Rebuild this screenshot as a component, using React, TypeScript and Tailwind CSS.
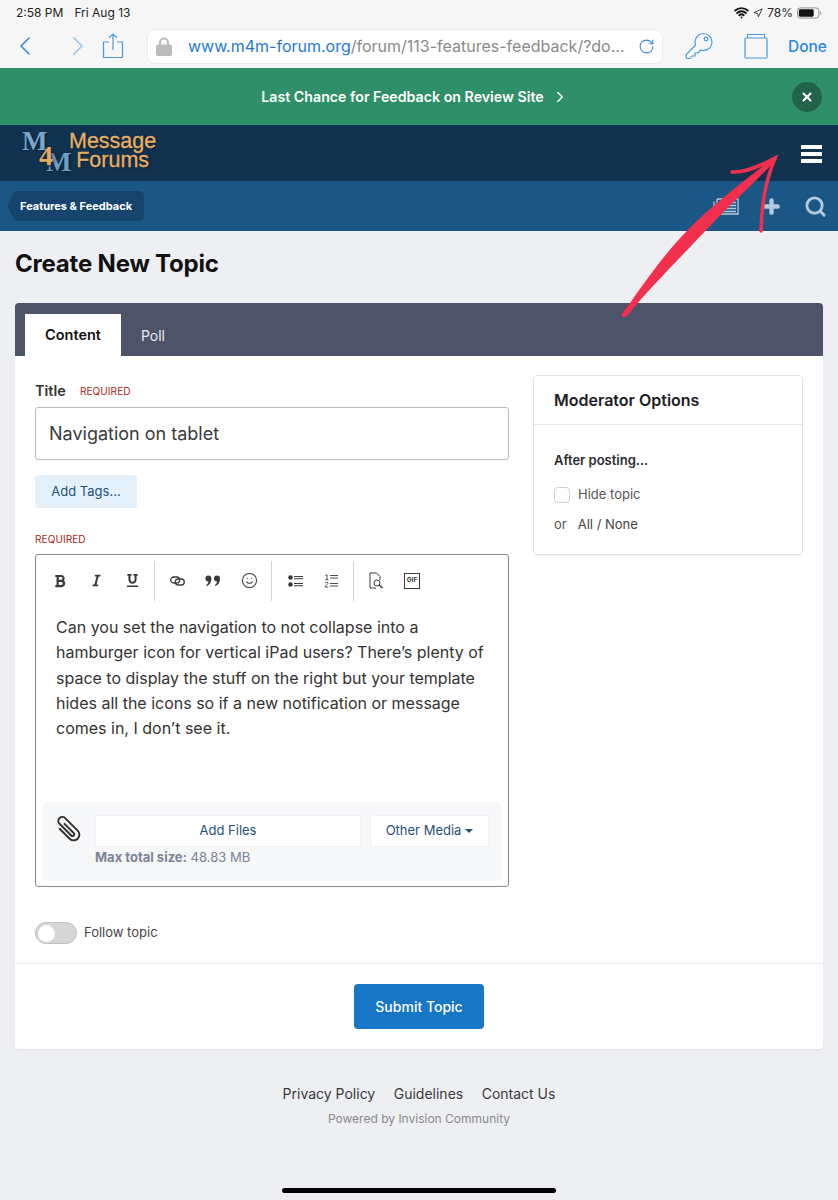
import React from 'react';
import { X, ChevronRight, ChevronLeft, Search, Plus, Smile, RotateCw, Navigation, Wifi } from 'lucide-react';
import { FaBold, FaItalic, FaUnderline } from 'react-icons/fa';

const ShareIcon = () => (
  <svg width="22" height="26" viewBox="0 0 22 26" fill="none" stroke="#4b9be0" strokeWidth="1.2">
    <path d="M7 9H1.500v15.500h19V9H15" />
    <path d="M11 17V1M7 4.800L11 1l4 3.800" />
  </svg>
);

const TabsIcon = () => (
  <svg width="24" height="26" viewBox="0 0 24 26" fill="none" stroke="#4b9be0" strokeWidth="1.2">
    <rect x="1" y="5" width="22" height="20" rx="1" />
    <path d="M3.500 5V1.500h17V5" />
  </svg>
);

const KeyIcon = () => (
  <svg width="28" height="28" viewBox="0 0 28 28" fill="none" stroke="#4b9be0" strokeWidth="1.2">
    <path d="M18.500 1.500a8.500 8.500 0 0 1 0 17c-1 0-2-.2-2.900-.5L13 21h-3v3H7l-2 2.500H2l-.8-.8v-3.200l9.400-9.500c-.4-1-.6-2-.6-3a8.500 8.500 0 0 1 8.500-8.500z" />
    <circle cx="21" cy="7" r="1.800" />
  </svg>
);

const LockIcon = () => (
  <svg className="shrink-0" width="16" height="19" viewBox="0 0 16 19" fill="#bcbcbc">
    <path d="M3 8V5.500a5 5 0 0 1 10 0V8h-2V5.500a3 3 0 0 0-6 0V8z" />
    <rect x="0" y="7.500" width="16" height="11.500" rx="2" />
  </svg>
);

const Battery = () => (
  <svg width="25" height="12" viewBox="0 0 27 12">
    <rect x="0.500" y="0.500" width="23" height="11" rx="3" fill="none" stroke="#888" />
    <rect x="2" y="2" width="16" height="8" rx="1.500" fill="#111" />
    <path d="M25 4.200c1 .3 1.400 1 1.400 1.800s-.4 1.500-1.400 1.800z" fill="#999" />
  </svg>
);

const NewsIcon = () => (
  <svg width="26" height="17" viewBox="0 0 26 17" fill="none" stroke="#b5c9dc" strokeWidth="1.300">
    <path d="M4 1h21v15H3a2 2 0 0 1-2-2V3.500" />
    <path d="M4 1v13" />
    <rect x="7" y="3.500" width="7" height="5" fill="#b5c9dc" stroke="none" />
    <path d="M16 4.500h7M16 7.500h7M7 10.500h16M7 13.500h16" />
  </svg>
);

const LinkIcon = () => (
  <svg width="15" height="10" viewBox="0 0 15 10" fill="none" stroke="#3a3a3a" strokeWidth="1.300">
    <rect x="0.700" y="1" width="9" height="6" rx="3" />
    <rect x="5.300" y="3" width="9" height="6" rx="3" />
  </svg>
);

const QuoteIcon = () => (
  <svg width="16" height="12" viewBox="0 0 16 12" fill="#3a3a3a">
    <circle cx="3.400" cy="3.500" r="3" />
    <path d="M6.400 3.500c0 4-2 6.500-4.600 7.500l-.6-1c1.600-1 2.300-2.500 2.300-4z" />
    <circle cx="12" cy="3.500" r="3" />
    <path d="M15 3.500c0 4-2 6.500-4.600 7.500l-.6-1c1.600-1 2.300-2.500 2.300-4z" />
  </svg>
);

const ListIcon = () => (
  <svg width="15" height="12" viewBox="0 0 15 12" fill="#3a3a3a">
    <circle cx="2.500" cy="2.500" r="2.300" />
    <circle cx="2.500" cy="9.500" r="2.300" />
    <rect x="6" y="1" width="9" height="1" />
    <rect x="6" y="3.200" width="9" height="1" />
    <rect x="6" y="8" width="9" height="1" />
    <rect x="6" y="10.200" width="9" height="1" />
  </svg>
);

const NumberedIcon = () => (
  <svg width="14" height="14" viewBox="0 0 14 14" fill="none" stroke="#3a3a3a" strokeWidth="0.9">
    <path d="M1.500 1.500L3 .8v5M1.500 5.800h3M1 9c.5-1 3-1 3 .4 0 1-3 2-3 3.600h3.300" />
    <path d="M6 1.500h8M6 4h8M6 9.500h8M6 12h8" />
  </svg>
);

const PreviewIcon = () => (
  <svg width="15" height="17" viewBox="0 0 15 17" fill="none" stroke="#3a3a3a" strokeWidth="1">
    <path d="M7 16H1V1h6.500L11 4.500V8" />
    <circle cx="8" cy="11" r="3" />
    <path d="M10.200 13.200L13.500 16" strokeWidth="1.500" />
  </svg>
);

const ClipIcon = () => (
  <svg className="shrink-0 -ml-[2px] -mt-[2px]" width="32" height="32" viewBox="0 0 28 28" fill="none" stroke="#333" strokeWidth="1.700">
    <g transform="rotate(-45 14 14)">
      <path d="M9 8v13a5 5 0 0 0 10 0V5.500a3.500 3.500 0 0 0-7 0V20a1.500 1.500 0 0 0 3 0V8" />
    </g>
  </svg>
);

const Arrow = () => (
  <svg className="absolute left-0 top-0 pointer-events-none" width="838" height="330" viewBox="0 0 838 330">
    <path
      d="M622 314C640 290 665 250 700 218C725 195 755 172 776 156L777 159C755 182 730 205 712 224C692 245 668 270 652 287C642 298 634 307 628 315C626 318 620 318 622 314Z"
      fill="#f2304e"
    />
    <path d="M732 172C745 173 760 166 775 158C768 175 762 195 761 231" fill="none" stroke="#f2304e" strokeWidth="3.500" strokeLinecap="round" />
  </svg>
);

const Divider = () => <div className="w-px h-10 bg-[#d4d4d4]" />;

const ToolBtn: React.FC<{ children: React.ReactNode }> = ({ children }) => (
  <div className="w-[36px] flex items-center justify-center">{children}</div>
);

export default function App() {
  return (
    <div className="relative w-[838px] h-[1200px] overflow-hidden bg-[#eeeff3] text-[#2d2d2d] font-['Inter','Liberation_Sans',sans-serif]">
      {/* Browser chrome */}
      <div className="h-[68px] bg-[#f6f6f6] flex flex-col">
        <div className="h-[25px] pl-4 pr-[16px] flex items-center justify-between text-[12px] text-[#222]">
          <div className="flex gap-[11px]">
            <span>2:58 PM</span>
            <span>Fri Aug 13</span>
          </div>
          <div className="flex items-center gap-[4px]">
            <Wifi size={15} strokeWidth={3} className="text-[#111]" />
            <Navigation size={10} className="text-[#222]" />
            <span className="text-[12px]">78%</span>
            <Battery />
          </div>
        </div>
        <div className="flex items-center h-[43px] pt-[1px] pb-[2px]">
          <div className="w-[147px] pl-[14px] flex items-center">
            <ChevronLeft size={32} strokeWidth={1.3} className="text-[#3b8fdc] -ml-[5px]" />
            <ChevronRight size={32} strokeWidth={1.3} className="text-[#9cc4ea] ml-[21px]" />
            <div className="ml-[8px]"><ShareIcon /></div>
          </div>
          <div className="w-[516px] h-[35px] bg-white rounded-[8px] border border-[#ececec] flex items-center pl-[8px] pr-[7px] text-[16px] whitespace-nowrap">
            <LockIcon />
            <span className="ml-[16px] text-[#1f7ad0]">www.m4m-forum.org</span>
            <span className="text-[#8a8a8a]">/forum/113-features-feedback/?do...</span>
            <RotateCw size={17} strokeWidth={1.5} className="ml-auto shrink-0 text-[#3b8fdc]" />
          </div>
          <div className="ml-[22px]"><KeyIcon /></div>
          <div className="ml-[31px]"><TabsIcon /></div>
          <span className="ml-[20px] pt-[1px] text-[15.5px] font-medium text-[#2b88dc]">Done</span>
        </div>
      </div>

      {/* Announcement */}
      <div className="relative h-[57px] bg-[#2f8f68] flex items-center justify-center text-white text-[14.2px] font-semibold pr-[8px] pt-[1px]">
        <span>Last Chance for Feedback on Review Site</span>
        <ChevronRight size={18} strokeWidth={2} className="ml-[7px]" />
        <div className="absolute left-[792px] top-[14px] w-[30px] h-[30px] rounded-full bg-[#23634c] flex items-center justify-center">
          <X size={14} strokeWidth={3.5} />
        </div>
      </div>

      {/* Site header */}
      <div className="h-[56px] bg-[#113350] flex justify-between pl-[21px] pr-[16px]">
        <div className="flex">
          <div className="relative w-[48px] h-[56px] font-['Liberation_Serif',serif] font-bold leading-none [text-shadow:1px_1px_3px_#0a1e30]">
            <span className="absolute left-[1px] top-[3px] text-[27px] text-[#7aa6c9]">M</span>
            <span className="absolute left-[25px] top-[24px] text-[27px] text-[#6f9fc4]">M</span>
            <span className="absolute left-[18px] top-[17px] text-[28px] text-[#e8a95c]">4</span>
          </div>
          <div className="pt-[6.5px] flex flex-col items-center text-[#e9ae62] text-[21.5px] leading-[19px] font-['Liberation_Sans',sans-serif] [-webkit-text-stroke:0.3px_#e9ae62] [text-shadow:1px_1px_3px_#0a1e30]">
            <span>Message</span>
            <span>Forums</span>
          </div>
        </div>
        <div className="flex flex-col gap-[3.5px] pt-[20px]">
          <div className="w-[21px] h-[3.5px] bg-white" />
          <div className="w-[21px] h-[3.5px] bg-white" />
          <div className="w-[21px] h-[3.5px] bg-white" />
        </div>
      </div>

      {/* Breadcrumb bar */}
      <div className="h-[50px] bg-[#1a5686] flex items-center justify-between pl-[15px] pr-[11px]">
        <div className="relative h-[30px] w-[129px] bg-[#16446d] rounded-r-[5px] flex items-center pl-[5px] text-white text-[11px] font-bold">
          <div className="absolute -left-[8px] top-0 w-0 h-0 border-y-[15px] border-y-transparent border-r-[8px] border-r-[#16446d]" />
          <span className="relative">Features &amp; Feedback</span>
        </div>
        <div className="flex items-center">
          <NewsIcon />
          <Plus size={21} strokeWidth={5} className="ml-[22px] text-[#b5c9dc]" />
          <Search size={23} strokeWidth={3} className="ml-[22px] text-[#b5c9dc]" />
        </div>
      </div>

      {/* Page */}
      <div className="px-[15px]">
        <h1 className="pt-[18px] h-[72px] text-[24px] leading-[30px] font-bold tracking-[-0.2px] text-[#111]">Create New Topic</h1>
        <div className="bg-white rounded-[4px] shadow-[0_1px_2px_rgba(0,0,0,0.06)] overflow-hidden h-[746px]">
          <div className="h-[53px] bg-[#4d5469] flex items-end pl-[10px]">
            <div className="h-[42px] w-[96px] bg-white flex items-center justify-center pb-[1px] text-[14.500px] font-semibold text-[#111]">Content</div>
            <div className="h-[42px] w-[64px] flex items-center justify-center text-[14px] text-[#e8e9ee]">Poll</div>
          </div>

          <div className="h-[607px] flex pl-[20px] pr-[20px] pt-[19px]">
            <div className="w-[474px] flex flex-col">
              <div className="flex items-center h-[32px]">
                <span className="text-[14.500px] font-semibold text-[#333] -mt-[1px]">Title</span>
                <span className="ml-[14px] text-[10px] text-[#a81c1c] tracking-[0.1px]">REQUIRED</span>
              </div>
              <div className="h-[53px] border border-[#bdbdbd] rounded-[3px] flex items-center pl-[13px] text-[18px] text-[#3a3a3a]">Navigation on tablet</div>
              <div className="mt-[15px] w-[102px] h-[33px] bg-[#e5f1fa] rounded-[4px] flex items-center justify-center text-[13px] text-[#1f5078]">Add Tags...</div>
              <div className="mt-[24px] h-[14px] flex items-center text-[10px] text-[#a81c1c] tracking-[0.1px]">REQUIRED</div>
              <div className="mt-[8px] h-[333px] border border-[#8a8a8a] rounded-[3px] flex flex-col">
                <div className="h-[50px] flex items-center pl-[6px] pt-[1px]">
                  <ToolBtn><FaBold size={14} className="text-[#3a3a3a]" /></ToolBtn>
                  <ToolBtn><FaItalic size={13} className="text-[#3a3a3a]" /></ToolBtn>
                  <ToolBtn><FaUnderline size={13} className="text-[#3a3a3a]" /></ToolBtn>
                  <div className="w-[4px]" />
                  <Divider />
                  <div className="w-[4px]" />
                  <ToolBtn><LinkIcon /></ToolBtn>
                  <ToolBtn><QuoteIcon /></ToolBtn>
                  <ToolBtn><Smile size={17} strokeWidth={1.5} className="text-[#3a3a3a]" /></ToolBtn>
                  <div className="w-[4px]" />
                  <Divider />
                  <div className="w-[5px]" />
                  <ToolBtn><ListIcon /></ToolBtn>
                  <ToolBtn><NumberedIcon /></ToolBtn>
                  <div className="w-[4px]" />
                  <Divider />
                  <div className="w-[4px]" />
                  <ToolBtn><PreviewIcon /></ToolBtn>
                  <ToolBtn>
                    <div className="w-[16px] h-[16px] border border-[#3a3a3a] flex items-center justify-center text-[6.5px] font-bold text-[#3a3a3a]">GIF</div>
                  </ToolBtn>
                </div>
                <p className="pl-[20px] pr-[16px] pt-[10px] text-[16px] leading-[25.3px] text-[#333]">
                  Can you set the navigation to not collapse into a hamburger icon for vertical iPad users? There’s plenty of space to display the stuff on the right but your template hides all the icons so if a new notification or message comes in, I don’t see it.
                </p>
                <div className="mt-auto mx-[6px] mb-[5px] h-[79px] bg-[#f6f7f9] rounded-[6px] flex pl-[12px] pr-[14px] pt-[13px]">
                  <ClipIcon />
                  <div className="ml-[11px] flex-1">
                    <div className="flex gap-[9px]">
                      <div className="w-[266px] h-[32px] bg-white rounded-[2px] border border-[#f1f1f3] flex items-center justify-center text-[13px] text-[#1f5078]">Add Files</div>
                      <div className="w-[119px] h-[32px] bg-white rounded-[2px] border border-[#f1f1f3] flex items-center justify-center text-[13px] text-[#1f5078]">
                        Other Media
                        <span className="ml-[4px] w-0 h-0 border-x-[4px] border-x-transparent border-t-[4px] border-t-[#1f5078]" />
                      </div>
                    </div>
                    <div className="mt-[1px] text-[13px] text-[#7b8394]">
                      <span className="font-bold">Max total size:</span> 48.83 MB
                    </div>
                  </div>
                </div>
              </div>
              <div className="mt-[35px] flex items-center">
                <div className="w-[42px] h-[22px] rounded-full bg-[#d6d6d6] border border-[#c0c0c0] flex items-center pl-[2px]">
                  <div className="w-[17px] h-[17px] rounded-full bg-white" />
                </div>
                <span className="ml-[7px] text-[13px] text-[#444]">Follow topic</span>
              </div>
            </div>

            <div className="ml-[24px] w-[271px] h-[180px] border border-[#e2e2e2] rounded-[4px] shadow-[0_1px_1px_rgba(0,0,0,0.04)]">
              <div className="h-[49px] border-b border-[#e8e8e8] flex items-center pl-[20px] text-[16px] font-semibold text-[#1c1c24]">Moderator Options</div>
              <div className="pl-[20px] pt-[28px] text-[13px] text-[#555]">
                <div className="h-[16px] flex items-center font-semibold text-[#2b2b33]">After posting...</div>
                <div className="mt-[18px] h-[16px] flex items-center">
                  <div className="w-[16px] h-[16px] rounded-[4px] border border-[#cfcfcf]" />
                  <span className="ml-[8px]">Hide topic</span>
                </div>
                <div className="mt-[14px] h-[16px] flex items-center">
                  <span>or</span>
                  <span className="ml-[11px] text-[#444]">All / None</span>
                </div>
              </div>
            </div>
          </div>

          <div className="h-[86px] border-t border-[#e9e9e9] flex items-center justify-center">
            <div className="w-[130px] h-[45px] bg-[#1776c6] rounded-[4px] flex items-center justify-center text-white text-[14px] font-medium">Submit Topic</div>
          </div>
        </div>

        <div className="mt-[34px] flex justify-center gap-[18.500px] text-[14px] text-[#3a3a3a]">
          <span>Privacy Policy</span>
          <span>Guidelines</span>
          <span>Contact Us</span>
        </div>
        <div className="mt-[6px] text-center text-[12px] text-[#8a8a8a]">Powered by Invision Community</div>
      </div>

      {/* Home indicator */}
      <div className="absolute left-[282px] bottom-[7px] w-[274px] h-[5px] rounded-full bg-black" />
      <Arrow />
    </div>
  );
}
